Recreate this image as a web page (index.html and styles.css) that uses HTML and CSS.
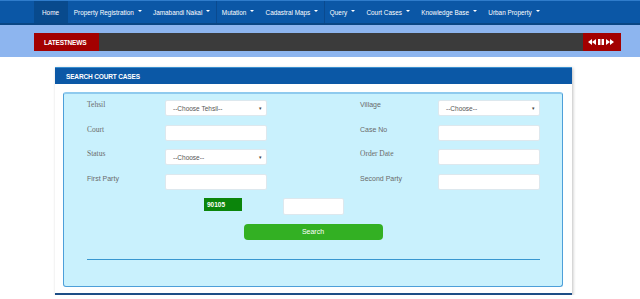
FILE: index.html
```html
<!DOCTYPE html>
<html lang="en">
<head>
<meta charset="utf-8">
<title>Search Court Cases</title>
<link rel="stylesheet" href="styles.css">
</head>
<body>
<nav class="topnav">
  <ul class="menu">
    <li class="item active">Home</li>
    <li class="item">Property Registration<span class="caret"></span></li>
    <li class="item">Jamabandi Nakal<span class="caret"></span></li>
    <li class="item sep">Mutation<span class="caret"></span></li>
    <li class="item">Cadastral Maps<span class="caret"></span></li>
    <li class="item sep">Query<span class="caret"></span></li>
    <li class="item">Court Cases<span class="caret"></span></li>
    <li class="item">Knowledge Base<span class="caret"></span></li>
    <li class="item">Urban Property<span class="caret"></span></li>
  </ul>
</nav>
<div class="band">
  <div class="ticker">
    <span class="news-label">LATESTNEWS</span>
    <div class="news-track"></div>
    <div class="news-ctrl">
      <svg width="8" height="6" viewBox="0 0 8 6"><path d="M4 0v6L0 3zM8 0v6L4 3z" fill="#fff"/></svg>
      <svg width="6" height="6" viewBox="0 0 6 6"><path d="M0 0h2.4v6H0zM3.6 0H6v6H3.6z" fill="#fff"/></svg>
      <svg width="8" height="6" viewBox="0 0 8 6"><path d="M0 0v6l4-3zM4 0v6l4-3z" fill="#fff"/></svg>
    </div>
  </div>
</div>
<main class="page">
  <section class="panel">
    <h2 class="panel-head">SEARCH COURT CASES</h2>
    <div class="panel-body">
      <form class="search-box">
        <div class="grid">
          <label class="lbl serif">Tehsil</label>
          <div class="field select"><span>--Choose Tehsil--</span><i class="arr">&#9662;</i></div>
          <span></span>
          <label class="lbl">Village</label>
          <div class="field select"><span>--Choose--</span><i class="arr">&#9662;</i></div>

          <label class="lbl serif">Court</label>
          <div class="field"></div>
          <span></span>
          <label class="lbl">Case No</label>
          <div class="field"></div>

          <label class="lbl serif">Status</label>
          <div class="field select"><span>--Choose--</span><i class="arr">&#9662;</i></div>
          <span></span>
          <label class="lbl serif">Order Date</label>
          <div class="field"></div>

          <label class="lbl">First Party</label>
          <div class="field"></div>
          <span></span>
          <label class="lbl">Second Party</label>
          <div class="field"></div>
        </div>
        <div class="captcha-row">
          <span class="captcha">90105</span>
          <div class="field captcha-input"></div>
        </div>
        <div class="btn-row"><button type="button" class="btn-search">Search</button></div>
        <hr class="rule">
      </form>
    </div>
  </section>
</main>
</body>
</html>
```
FILE: styles.css
```css
* { box-sizing: border-box; }
body {
  margin: 0;
  background: #fff;
  font-family: "Liberation Sans", Arial, sans-serif;
}
.topnav {
  height: 25px;
  background: #0b57a6;
  border-top: 1px solid #2f7ccb;
  border-bottom: 2px solid #0a4684;
}
.menu {
  list-style: none;
  margin: 0;
  padding: 0 0 0 34px;
  display: flex;
  height: 22px;
}
.item {
  display: flex;
  align-items: center;
  padding: 0 5.5px 0 5.7px;
  color: #fff;
  font-size: 6.4px;
  white-space: nowrap;
}
.item.active {
  background: #084a8d;
  padding: 0 9px 0 8px;
}
.item.sep { border-left: 1px solid #0a4a8f; padding-left: 5px; }
.caret {
  display: inline-block;
  width: 0; height: 0;
  margin-left: 4px;
  margin-top: -3px;
  border-left: 2px solid transparent;
  border-right: 2px solid transparent;
  border-top: 2.5px solid #fff;
}
.band {
  background: #8db5ef;
  padding: 8px 19px 6px 34px;
}
.ticker {
  display: flex;
  height: 18px;
}
.news-label {
  width: 65px;
  background: #a30000;
  color: #fff;
  font-weight: bold;
  font-size: 6.5px;
  letter-spacing: -0.2px;
  display: flex;
  align-items: center;
  padding-left: 10px;
}
.news-track { flex: 1; background: #3b3b3b; }
.news-ctrl {
  width: 38px;
  background: #a30000;
  display: flex;
  align-items: center;
  justify-content: center;
  gap: 2px;
  padding-right: 2px;
}
.page { padding: 10px 0 0 55px; }
.panel {
  width: 517px;
  background: #fff;
  box-shadow: 1px 1px 3px rgba(0,0,0,0.25);
  border-bottom: 2px solid #1d4e86;
}
.panel-head {
  margin: 0;
  height: 17px;
  background: #0b58a6;
  border-top: 1px solid #3a8fcf;
  color: #fff;
  font-size: 6.5px;
  font-weight: bold;
  letter-spacing: -0.15px;
  display: flex;
  align-items: center;
  padding-left: 11px;
}
.panel-body { padding: 8px 9px 6px 8px; }
.search-box {
  margin: 0;
  background: #c9f1fd;
  border: 1px solid #4d9fd9;
  border-top: 2px solid #8fcaee;
  border-radius: 3px;
  padding: 6px 22px 27px 23px;
  height: 195px;
}
.grid {
  display: grid;
  grid-template-columns: 78px 102px 93px 78px 102px;
  grid-auto-rows: 16px;
  row-gap: 8.6px;
}
.lbl {
  font-size: 7px;
  color: #6a6a6a;
  line-height: 8px;
  margin-top: 1px;
}
.lbl.serif { font-family: "Liberation Serif", "Times New Roman", serif; font-size: 7.5px; }
.field {
  background: #fff;
  border: 1px solid #dde8ee;
  border-radius: 2px;
  height: 16px;
}
.select {
  display: flex;
  align-items: center;
  justify-content: space-between;
  padding: 0 4px 0 7px;
  font-size: 6.5px;
  color: #555;
}
.arr { font-style: normal; font-size: 5px; color: #444; }
.captcha-row {
  display: flex;
  align-items: flex-start;
  margin-top: 8px;
  padding-left: 117px;
  height: 17px;
}
.captcha {
  width: 38px;
  height: 13px;
  background: #0b850b;
  color: #fff;
  font-size: 6.5px;
  font-weight: bold;
  display: flex;
  align-items: center;
  padding-left: 3px;
}
.captcha-input { width: 61px; height: 17px; margin-left: 41px; }
.btn-row { display: flex; justify-content: center; margin-top: 9px; padding-right: 1px; }
.btn-search {
  width: 139px;
  height: 16px;
  background: #33b023;
  border: 0;
  border-radius: 4px;
  color: #fff;
  font-family: "Liberation Sans", Arial, sans-serif;
  font-size: 7px;
  padding: 0;
}
.rule {
  margin: 19px 0 0 0;
  border: 0;
  border-top: 1px solid #3897d0;
  height: 0;
}
```
